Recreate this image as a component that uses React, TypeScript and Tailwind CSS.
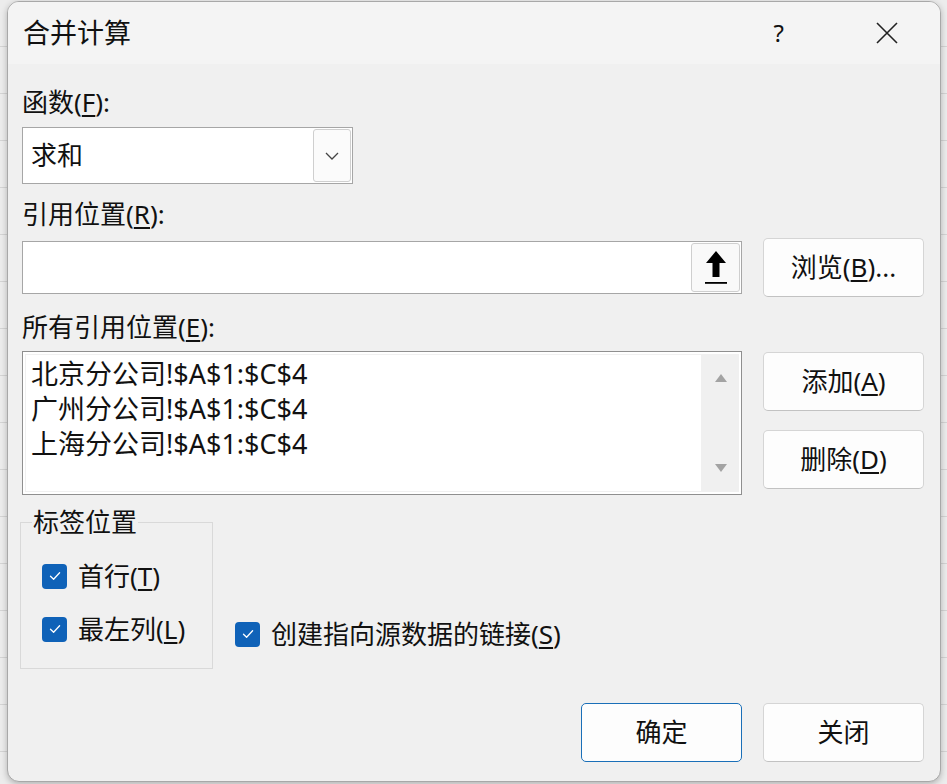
import type { ReactNode } from 'react'

const font = { fontFamily: '"Noto Sans", "Noto Sans CJK SC", sans-serif' }

function Key({ children }: { children: ReactNode }) {
  return <span className="underline underline-offset-[3px] decoration-[1.5px]">{children}</span>
}

function Button({ children, primary }: { children: ReactNode; primary?: boolean }) {
  return (
    <button
      className={
        'w-[161px] h-[59px] rounded-[5px] text-[26px] text-[#111] flex items-center justify-center ' +
        (primary
          ? 'bg-[#fdfdfd] border border-[#1a6fb8]'
          : 'bg-[#fdfdfd] border border-[#d5d5d5] border-b-[#c2c2c2]')
      }
    >
      {children}
    </button>
  )
}

function Check({ label }: { label: ReactNode }) {
  return (
    <div className="flex items-center h-[34px]">
      <span className="w-[25px] h-[25px] rounded-[4px] bg-[#0f62b8] flex items-center justify-center">
        <svg width="14" height="14" viewBox="0 0 14 14">
          <path d="M2.5 7.3 L5.6 10.2 L11.6 3.8" fill="none" stroke="white" strokeWidth="1.3" strokeLinecap="round" strokeLinejoin="round" />
        </svg>
      </span>
      <span className="ml-[11px] text-[26px] text-[#111] leading-[34px]">{label}</span>
    </div>
  )
}

export default function App() {
  return (
    <div
      className="w-[947px] h-[784px] overflow-hidden bg-[repeating-linear-gradient(to_bottom,#ececec_0px,#ececec_46px,#d4d4d4_46px,#d4d4d4_47px)] pt-[1px] pl-[7px]"
      style={font}
    >
      <div className="w-[934px] h-[781px] rounded-[12px] border border-[#a8a8a8] bg-[#f0f0f0] shadow-[0_2px_6px_rgba(0,0,0,0.25)] overflow-hidden flex flex-col">
        {/* Title bar */}
        <div className="h-[62px] shrink-0 bg-[#f4f4f4] flex items-center pl-[15px]">
          <span className="text-[27px] text-[#111]">合并计算</span>
          <span className="ml-auto text-[24px] text-[#111] mr-[92px]">?</span>
          <svg width="22" height="22" viewBox="0 0 22 22" className="mr-[42px]">
            <path d="M1 1 L21 21 M21 1 L1 21" stroke="#222" strokeWidth="1.6" />
          </svg>
        </div>

        {/* Body */}
        <div className="flex-1 flex flex-col pl-[14px] pr-[16px] pb-[19px] text-[#111]">
          <div className="mt-[21px] text-[26px] leading-[34px]">
            函数(<Key>F</Key>):
          </div>
          <div className="mt-[8px] w-[331px] h-[57px] bg-white border border-[#a6a6a6] flex items-center pl-[8px]">
            <span className="text-[26px]">求和</span>
            <span className="ml-auto mr-[1px] w-[38px] h-[53px] border border-[#cfcfcf] rounded-[3px] bg-[#fbfbfb] flex items-center justify-center">
              <svg width="14" height="8" viewBox="0 0 14 8">
                <path d="M1 1 L7 7 L13 1" fill="none" stroke="#444" strokeWidth="1.3" />
              </svg>
            </span>
          </div>

          <div className="mt-[13px] text-[26px] leading-[34px]">
            引用位置(<Key>R</Key>):
          </div>
          <div className="mt-[7px] flex items-center gap-[21px]">
            <div className="w-[720px] h-[53px] bg-white border border-[#a6a6a6] flex items-center justify-end pr-[1px]">
              <span className="w-[49px] h-[49px] border border-[#cfcfcf] rounded-[3px] bg-[#f9f9f9] flex items-center justify-center">
                <svg width="22" height="36" viewBox="0 0 22 36">
                  <path d="M11 1 L1 13 L7.5 13 L7.5 27 L14.5 27 L14.5 13 L21 13 Z" fill="#000" />
                  <rect x="0" y="32" width="22" height="1.8" fill="#000" />
                </svg>
              </span>
            </div>
            <Button>
              浏览(<Key>B</Key>)...
            </Button>
          </div>

          <div className="mt-[13px] text-[26px] leading-[34px]">
            所有引用位置(<Key>E</Key>):
          </div>
          <div className="mt-[7px] flex items-start gap-[21px]">
            <div className="w-[720px] h-[144px] bg-white border border-[#8f8f8f] flex p-[2px]">
              <div className="flex-1 pl-[5px] pt-[1px] text-[27px] leading-[35px] border border-[#f0f0f0]">
                <div>北京分公司!$A$1:$C$4</div>
                <div>广州分公司!$A$1:$C$4</div>
                <div>上海分公司!$A$1:$C$4</div>
              </div>
              <div className="w-[37px] bg-[#f0f0f0] flex flex-col items-center justify-between py-[20px]">
                <svg width="12" height="8" viewBox="0 0 12 8">
                  <path d="M6 0 L12 8 L0 8 Z" fill="#a3a3a3" />
                </svg>
                <svg width="12" height="8" viewBox="0 0 12 8">
                  <path d="M0 0 L12 0 L6 8 Z" fill="#a3a3a3" />
                </svg>
              </div>
            </div>
            <div className="flex flex-col gap-[19px] pt-[1px]">
              <Button>
                添加(<Key>A</Key>)
              </Button>
              <Button>
                删除(<Key>D</Key>)
              </Button>
            </div>
          </div>

          <div className="mt-[10px] flex items-end">
            <fieldset className="ml-[-2px] w-[193px] h-[164px] border border-[#d9d9d9] p-0">
              <legend className="ml-[11px] px-[1px] text-[26px] leading-[34px]">标签位置</legend>
              <div className="pl-[21px] pt-[20px]">
                <Check label={<>首行(<Key>T</Key>)</>} />
                <div className="mt-[19px]">
                  <Check label={<>最左列(<Key>L</Key>)</>} />
                </div>
              </div>
            </fieldset>
            <div className="ml-[22px] mb-[18px]">
              <Check label={<>创建指向源数据的链接(<Key>S</Key>)</>} />
            </div>
          </div>

          <div className="mt-auto flex justify-end gap-[21px]">
            <Button primary>确定</Button>
            <Button>关闭</Button>
          </div>
        </div>
      </div>
    </div>
  )
}
